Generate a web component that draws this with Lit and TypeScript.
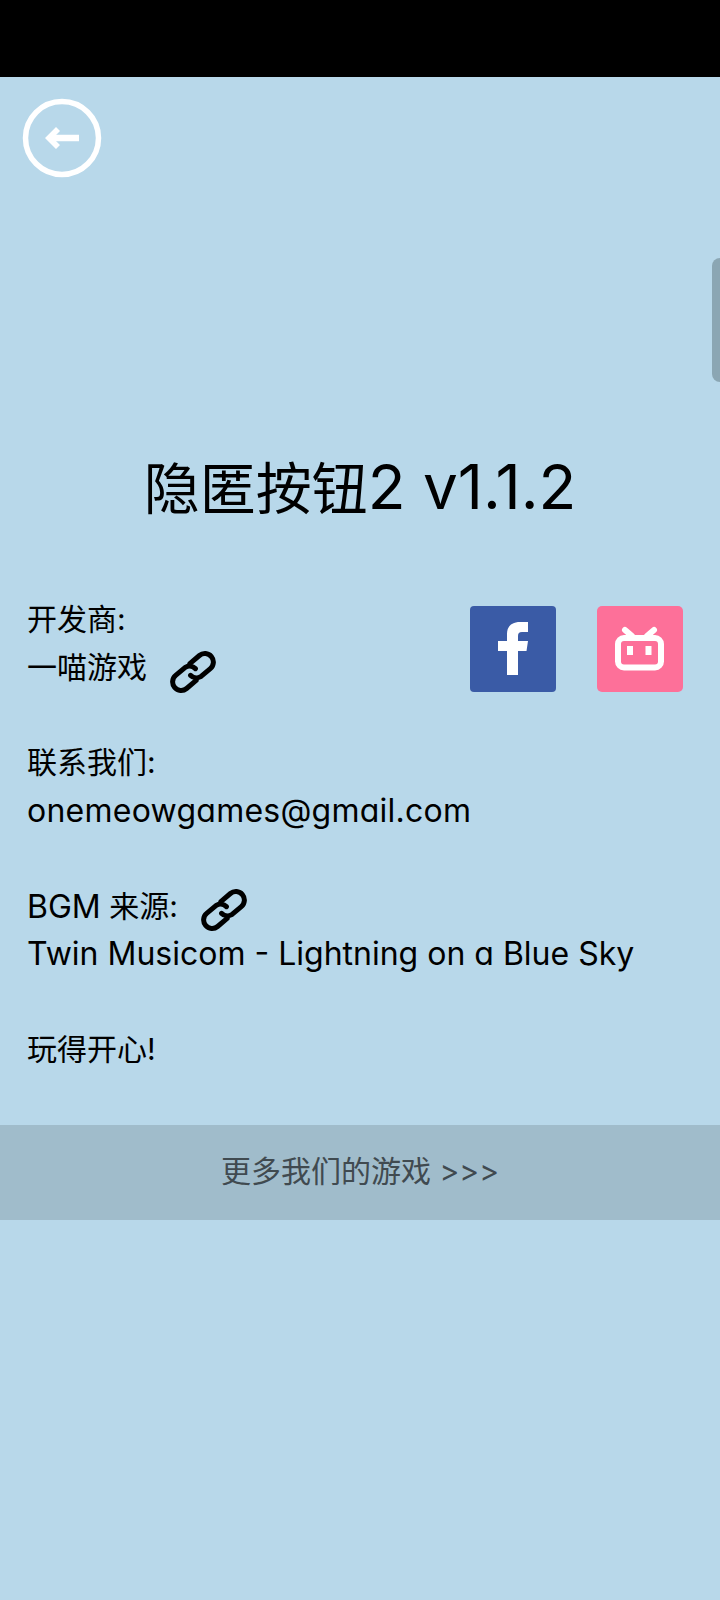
import { LitElement, html, css, svg } from 'lit';
import { customElement } from 'lit/decorators.js';

// two open chain links, drawn flat and tilted about the middle
const linkIcon = svg`
  <g transform="rotate(-40)" fill="none" stroke="#000" stroke-width="5" stroke-linecap="round" stroke-linejoin="round">
    <path d="M3 -8.5 H15.5 A8.5 8.5 0 0 1 15.5 8.5 H3 A8.5 8.5 0 0 1 -4 1" />
    <path d="M-3 8.5 H-15.5 A8.5 8.5 0 0 1 -15.5 -8.5 H-3 A8.5 8.5 0 0 1 4 -1" />
  </g>
`;

@customElement('app-root')
export class AppRoot extends LitElement {
  static styles = css`
    :host {
      display: block;
      position: relative;
      height: 1600px;
      overflow: hidden;
      background-color: #b8d8ea;
      color: #000;
      font-family: Inter, 'Noto Sans CJK SC', sans-serif;
      font-feature-settings: 'cv11';
    }
    .status {
      height: 77px;
      background-color: #000;
    }
    .back {
      display: block;
      width: 80px;
      height: 80px;
      margin: 21px 0 0 22px;
    }
    .title {
      margin: 271px 0 0;
      font-size: 56px;
      font-weight: 400;
      line-height: 80px;
      text-align: center;
    }
    .title .latin {
      font-size: 62px;
      vertical-align: baseline;
    }
    .info {
      display: flex;
      justify-content: space-between;
      align-items: flex-start;
      margin-top: 67px;
      padding: 0 37px 0 27px;
    }
    .text {
      display: flex;
      flex: 1 1 0;
      flex-direction: column;
      gap: 47.75px;
      min-width: 0;
      font-size: 30px;
      line-height: 47.75px;
      white-space: nowrap;
    }
    .latin {
      font-size: 32px;
      line-height: 1;
      vertical-align: -1px;
    }
    .mail {
      letter-spacing: 0.25px;
    }
    .line {
      display: flex;
      align-items: center;
      gap: 23px;
    }
    .line svg {
      width: 46px;
      height: 46px;
      flex: none;
      margin: 4px 0 -4px;
    }
    .social {
      display: flex;
      flex: none;
      gap: 41px;
      margin-top: 10px;
    }
    .social svg {
      display: block;
      width: 86px;
      height: 86px;
    }
    .more {
      margin-top: 51px;
      height: 95px;
      background-color: #a0bccb;
      color: #404a50;
      font-size: 30px;
      line-height: 93px;
      text-align: center;
    }
    .panel {
      position: absolute;
      top: 258px;
      right: 0;
      width: 8px;
      height: 124px;
      border-radius: 8px 0 0 8px;
      background-color: #8ba6b3;
    }
  `;

  render() {
    return html`
      <div class="status"></div>
      <svg class="back" viewBox="0 0 80 80">
        <circle cx="40" cy="40" r="36.5" fill="none" stroke="#fff" stroke-width="5.5" />
        <path d="M28 40 H57" fill="none" stroke="#fff" stroke-width="6.5" />
        <path d="M23 40 L34 29 L38 33 L31 40 L38 47 L34 51 Z" fill="#fff" />
      </svg>
      <h1 class="title">隐匿按钮<span class="latin">2 v1.1.2</span></h1>
      <section class="info">
        <div class="text">
          <div>
            <div>开发商:</div>
            <div class="line"><span>一喵游戏</span><svg viewBox="-23 -23 46 46">${linkIcon}</svg></div>
          </div>
          <div>
            <div>联系我们:</div>
            <div><span class="latin mail">onemeowgames@gmail.com</span></div>
          </div>
          <div>
            <div class="line"><span><span class="latin">BGM</span> 来源:</span><svg viewBox="-23 -23 46 46">${linkIcon}</svg></div>
            <div><span class="latin">Twin Musicom - Lightning on a Blue Sky</span></div>
          </div>
          <div>玩得开心!</div>
        </div>
        <div class="social">
          <svg viewBox="0 0 86 86">
            <rect width="86" height="86" rx="4" fill="#3a5ba6" />
            <path d="M37 69 V45 H28 V35 H37 V28 C37 20 42 16 50 16 H58 V26 H52 C49 26 48 27.5 48 30 V35 H58 L56.5 45 H48 V69 Z" fill="#fff" />
          </svg>
          <svg viewBox="0 0 86 86">
            <rect width="86" height="86" rx="5" fill="#fd7099" />
            <g fill="none" stroke="#fff" stroke-width="6" stroke-linecap="round">
              <rect x="21" y="32" width="43" height="29.5" rx="6" />
              <path d="M28 24 L35 30 M57 24 L50 30" />
            </g>
            <rect x="30" y="40" width="6" height="9" fill="#fff" />
            <rect x="48.5" y="40" width="6" height="9" fill="#fff" />
          </svg>
        </div>
      </section>
      <div class="more">更多我们的游戏 &gt;&gt;&gt;</div>
      <div class="panel"></div>
    `;
  }
}
